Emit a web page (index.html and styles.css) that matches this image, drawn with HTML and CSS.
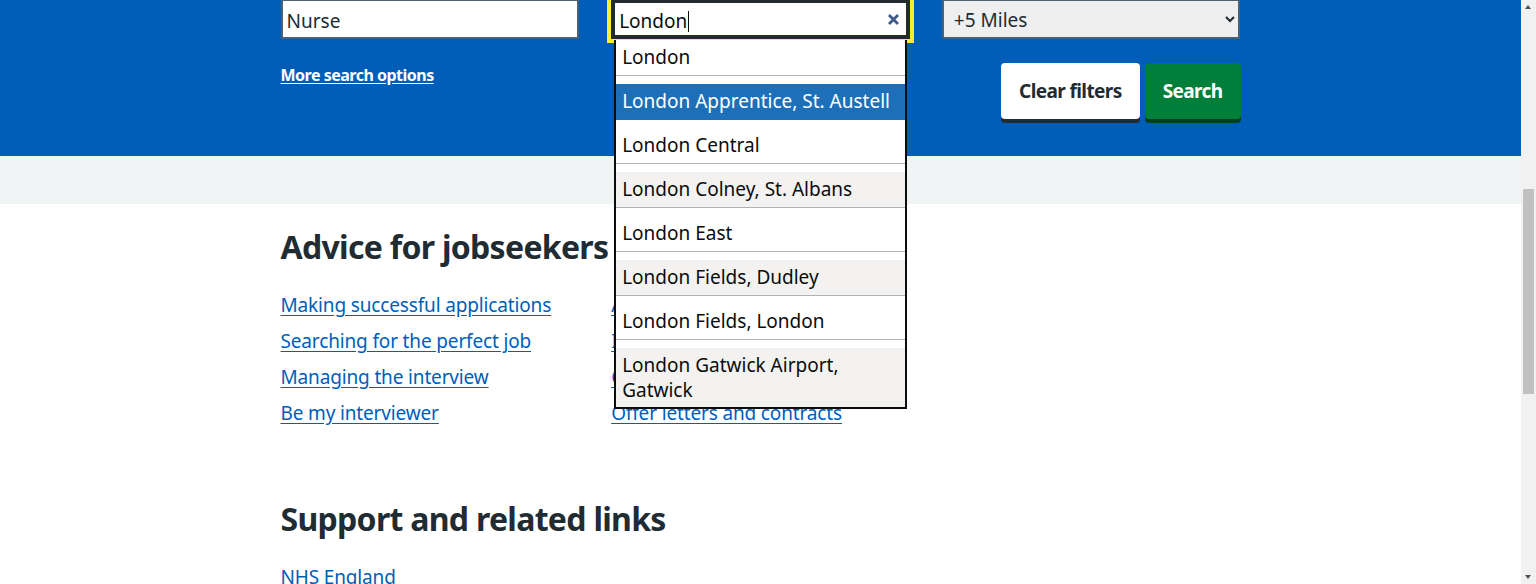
FILE: index.html
```html
<!DOCTYPE html>
<html lang="en">
<head>
<meta charset="utf-8">
<title>Search jobs</title>
<link rel="stylesheet" href="styles.css">
</head>
<body>
<form class="search-band">
  <div class="container">
    <div class="grid fields">
      <div class="col">
        <input class="text-input" type="text" value="Nurse" aria-label="Job title">
      </div>
      <div class="col location">
        <div class="text-input text-input--focus" role="combobox" aria-expanded="true">
          <span class="typed">London</span><span class="caret"></span>
          <span class="clear" aria-label="Clear">
            <svg width="13" height="13" viewBox="0 0 13 13"><path d="M2 2 L11 11 M11 2 L2 11" stroke="#3d5a8c" stroke-width="2.8" stroke-linecap="butt"/></svg>
          </span>
        </div>
        <ul class="menu" role="listbox">
          <li>London</li>
          <li class="active">London Apprentice, St. Austell</li>
          <li>London Central</li>
          <li>London Colney, St. Albans</li>
          <li>London East</li>
          <li>London Fields, Dudley</li>
          <li>London Fields, London</li>
          <li>London Gatwick Airport, Gatwick</li>
        </ul>
      </div>
      <div class="col">
        <select class="select" aria-label="Distance">
          <option>+5 Miles</option>
          <option>+10 Miles</option>
        </select>
      </div>
    </div>
    <div class="grid actions">
      <div class="col">
        <a class="more-link" href="#">More search options</a>
      </div>
      <div class="col buttons">
        <button type="button" class="button button--reverse">Clear filters</button>
        <button type="submit" class="button">Search</button>
      </div>
    </div>
  </div>
</form>
<div class="grey-band"></div>
<main class="container content">
  <section class="section">
    <h2 class="heading">Advice for jobseekers</h2>
    <div class="grid">
      <ul class="link-list">
        <li><a href="#">Making successful applications</a></li>
        <li><a href="#">Searching for the perfect job</a></li>
        <li><a href="#">Managing the interview</a></li>
        <li><a href="#">Be my interviewer</a></li>
      </ul>
      <ul class="link-list">
        <li><a href="#">After the interview</a></li>
        <li><a href="#">Improving your application</a></li>
        <li><a href="#">Checks before you start</a></li>
        <li><a href="#">Offer letters and contracts</a></li>
      </ul>
    </div>
  </section>
  <section class="section section--support">
    <h2 class="heading">Support and related links</h2>
    <ul class="link-list">
      <li><a href="#">NHS England</a></li>
      <li><a href="#">Health Careers</a></li>
    </ul>
  </section>
</main>
<div class="scrollbar" aria-hidden="true">
  <span class="arrow arrow--up"></span>
  <span class="thumb"></span>
  <span class="arrow arrow--down"></span>
</div>
</body>
</html>
```

FILE: styles.css
```css
body {
  margin: 0;
  font-family: "Noto Sans", "Open Sans", Arial, sans-serif;
  color: #212b32;
  background: #ffffff;
}
.container {
  width: 960px;
  margin-left: calc((100% - 975px) / 2);
}
.search-band {
  background: #005eb8;
  padding-bottom: 37px;
  margin: 0;
}
.grid {
  display: grid;
  grid-template-columns: repeat(3, 1fr);
  column-gap: 32px;
}
.fields {
  margin-top: -1px;
}
.col {
  min-width: 0;
}
.text-input {
  box-sizing: border-box;
  display: flex;
  align-items: center;
  width: 100%;
  height: 40px;
  margin: 0;
  padding: 6px 4px 2px;
  border: 2px solid #4c6272;
  border-radius: 0;
  background: #ffffff;
  font-family: inherit;
  font-size: 19px;
  line-height: 28px;
  color: #212b32;
}
.location {
  position: relative;
}
.text-input--focus {
  border-color: #212b32;
  box-shadow: inset 0 0 0 2px #212b32, 0 0 0 4px #ffeb3b;
  padding-left: 6px;
}
.typed {
  color: #0b0c0c;
}
.caret {
  display: inline-block;
  width: 1px;
  height: 21px;
  background: #0b0c0c;
  margin-left: 1px;
}
.clear {
  margin-left: auto;
  margin-right: 4px;
  margin-top: -4px;
  display: flex;
  align-items: center;
}
.menu {
  position: absolute;
  top: 100%;
  left: 3px;
  right: 3px;
  margin: 1px 0 0;
  padding: 0;
  list-style: none;
  background: #ffffff;
  border: 2px solid #0b0c0c;
  border-top: 0;
  height: 367px;
  overflow: hidden;
  z-index: 10;
}
.menu li {
  margin-top: 8px;
  padding: 5px 6px;
  font-size: 19px;
  line-height: 25px;
  color: #0b0c0c;
  border-bottom: 1px solid #b1b4b6;
}
.menu li:first-child {
  margin-top: 0;
}
.menu li:nth-child(even) {
  background: #f3f2f1;
}
.menu li.active {
  background: #1d70b8;
  color: #ffffff;
  border-bottom-color: #1d70b8;
}
.select {
  box-sizing: border-box;
  width: 100%;
  height: 40px;
  margin: 0;
  padding: 5px 6px 3px;
  border: 2px solid #4c6272;
  border-radius: 0;
  background-color: #efefef;
  font-family: inherit;
  font-size: 19px;
  color: #212b32;
}
.actions {
  margin-top: 24px;
}
.buttons {
  grid-column: 2 / 4;
  display: flex;
  justify-content: flex-end;
  gap: 5px;
}
.more-link {
  display: inline-block;
  color: #ffffff;
  font-weight: 700;
  font-size: 16px;
  line-height: 24px;
  letter-spacing: -0.5px;
  text-decoration: underline;
  text-underline-offset: 2px;
}
.button {
  box-sizing: border-box;
  height: 56px;
  padding: 12px 16px;
  border: 2px solid transparent;
  border-radius: 4px;
  background: #007f3b;
  box-shadow: 0 4px 0 #00401e;
  color: #ffffff;
  font-family: inherit;
  font-weight: 700;
  font-size: 19px;
  line-height: 28px;
  letter-spacing: -0.6px;
  cursor: pointer;
}
.button--reverse {
  background: #ffffff;
  color: #212b32;
  box-shadow: 0 4px 0 #212b32;
}
.grey-band {
  height: 48px;
  background: #f0f4f5;
}
.content {
  padding-top: 23px;
}
.heading {
  margin: 0 0 24px;
  font-size: 32px;
  line-height: 40px;
  font-weight: 700;
  letter-spacing: -0.7px;
  color: #212b32;
}
.link-list {
  list-style: none;
  margin: 0;
  padding: 0;
}
.link-list li {
  margin-bottom: 8px;
  font-size: 19px;
  line-height: 28px;
  letter-spacing: -0.15px;
}
.link-list a {
  color: #005eb8;
  text-decoration: underline;
  text-underline-offset: 3px;
}
.section--support {
  margin-top: 64px;
}
.scrollbar {
  position: fixed;
  top: 0;
  right: 0;
  width: 15px;
  height: 100vh;
  background: #f1f1f1;
  z-index: 20;
}
.thumb {
  position: absolute;
  top: 189px;
  left: 2px;
  width: 11px;
  height: 205px;
  background: #c1c1c1;
}
.arrow {
  position: absolute;
  left: 4px;
  width: 0;
  height: 0;
  border-left: 3.5px solid transparent;
  border-right: 3.5px solid transparent;
}
.arrow--up {
  top: 5px;
  border-bottom: 4px solid #505050;
}
.arrow--down {
  bottom: 5px;
  border-top: 4px solid #505050;
}
```
